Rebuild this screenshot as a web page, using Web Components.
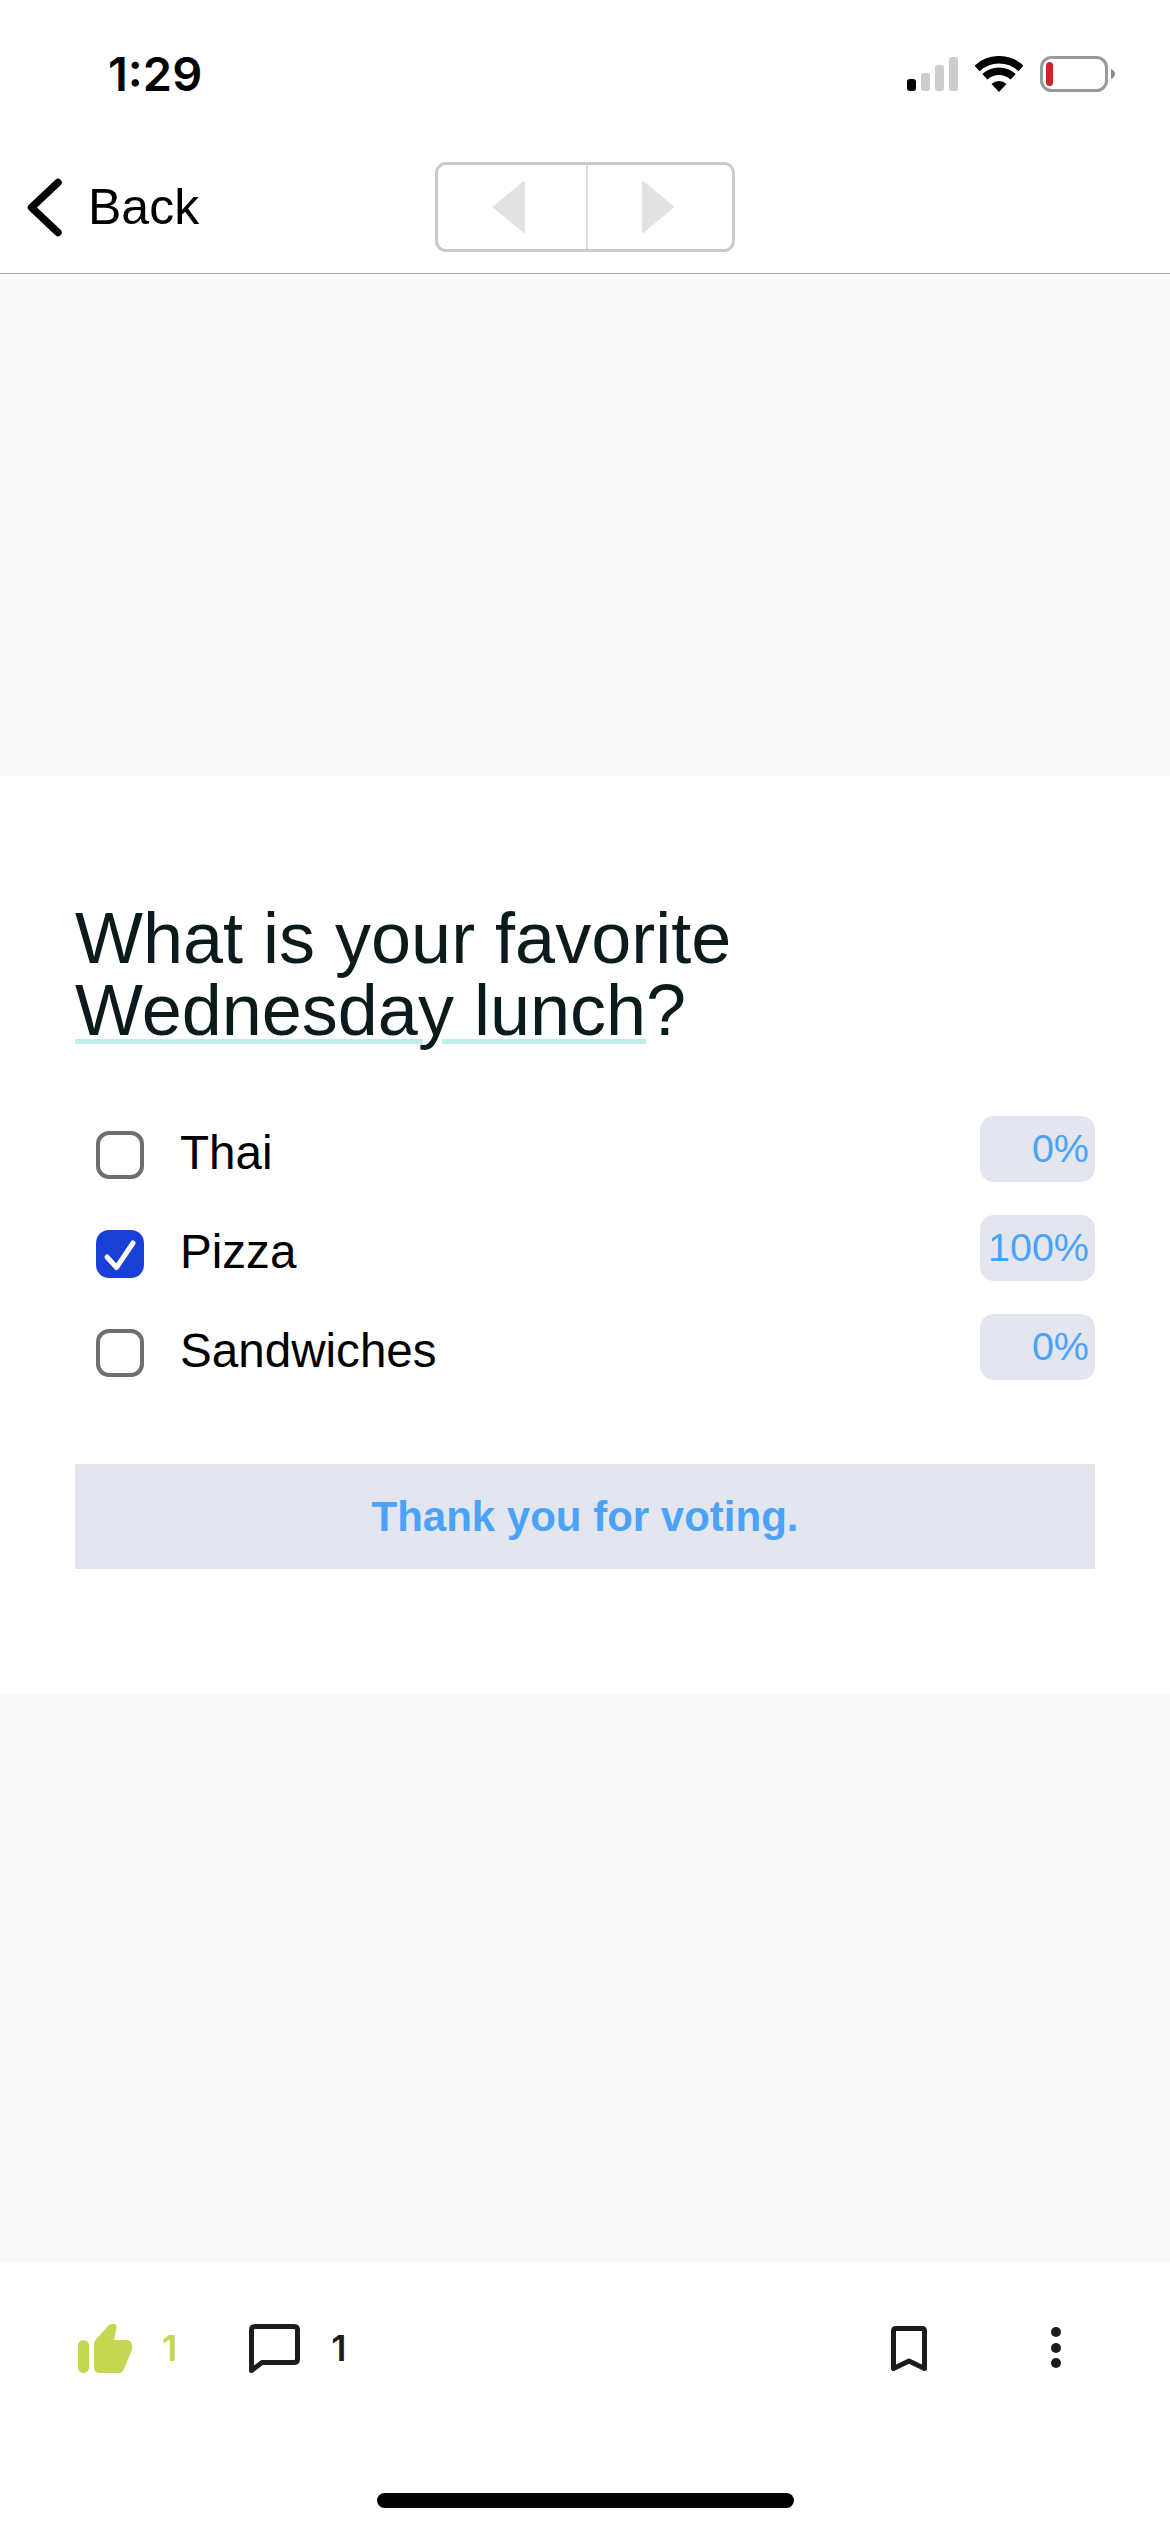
<!DOCTYPE html>
<html lang="en">
<head>
<meta charset="utf-8">
<title>Poll</title>
<style>
    html, body { margin: 0; padding: 0; background: #fff; }
    body { width: 1170px; height: 2532px; overflow: hidden; font-family: "Liberation Sans", Arial, sans-serif; }
</style>
</head>
<body>
<app-screen>
    <status-bar time="1:29"></status-bar>
    <nav-bar></nav-bar>
    <gray-band size="502"></gray-band>
    <poll-card>
        <span slot="question">What is your favorite <u>Wednesday lunch</u>?</span>
        <poll-option percent="0%">Thai</poll-option>
        <poll-option percent="100%" checked>Pizza</poll-option>
        <poll-option percent="0%">Sandwiches</poll-option>
        <span slot="message">Thank you for voting.</span>
    </poll-card>
    <gray-band size="568"></gray-band>
    <action-bar likes="1" comments="1"></action-bar>
</app-screen>

<script>
class AppScreen extends HTMLElement {
    constructor() {
        super();
        this.attachShadow({mode: 'open'});
        this.shadowRoot.innerHTML = `
            <style>
                :host { display: flex; flex-direction: column; width: 1170px; height: 2532px; }
            </style>
            <slot></slot>
        `;
    }
}

class StatusBar extends HTMLElement {
    constructor() {
        super();
        this.attachShadow({mode: 'open'});
    }
    connectedCallback() {
        this.shadowRoot.innerHTML = `
            <style>
                :host { display: flex; align-items: center; justify-content: space-between; box-sizing: border-box; height: 100px; padding: 48px 55px 0 108px; }
                .time { font: 600 47px/52px Inter, "Liberation Sans", sans-serif; color: #000; }
                .icons { display: flex; align-items: center; }
                svg { display: block; }
                .wifi { margin-left: 17px; }
                .battery { margin-left: 17px; }
            </style>
            <span class="time">${this.getAttribute('time')}</span>
            <div class="icons">
                <svg width="51" height="34" viewBox="0 0 51 34">
                    <rect x="0" y="22" width="9" height="12" rx="3" fill="#000"/>
                    <rect x="14" y="16" width="9" height="18" rx="3" fill="#ccc"/>
                    <rect x="28" y="8" width="9" height="26" rx="3" fill="#ccc"/>
                    <rect x="42" y="0" width="9" height="34" rx="3" fill="#ccc"/>
                </svg>
                <svg class="wifi" width="48" height="36" viewBox="0 0 48 36">
                    <path d="M2 12.4A32.25 32.25 0 0 1 46 12.4" fill="none" stroke="#000" stroke-width="7.5"/>
                    <path d="M9.85 20.8A20.75 20.75 0 0 1 38.15 20.8" fill="none" stroke="#000" stroke-width="7.5"/>
                    <path d="M24 36L16.5 28A11 11 0 0 1 31.5 28Z" fill="#000"/>
                </svg>
                <svg class="battery" width="75" height="36" viewBox="0 0 75 36">
                    <rect x="1.5" y="1.5" width="65" height="33" rx="10" fill="#fff" stroke="#999" stroke-width="3"/>
                    <rect x="6" y="6" width="7" height="24" rx="3.5" fill="#c82727"/>
                    <path d="M71 13Q75 15 75 18Q75 21 71 23Z" fill="#888"/>
                </svg>
            </div>
        `;
    }
}

class NavBar extends HTMLElement {
    constructor() {
        super();
        this.attachShadow({mode: 'open'});
        this.shadowRoot.innerHTML = `
            <style>
                :host { display: grid; grid-template-columns: 1fr auto 1fr; align-items: center; box-sizing: border-box; height: 174px; padding: 62px 0 21px; border-bottom: 1px solid #b0b0b0; }
                .back { display: flex; align-items: center; padding-left: 26px; font-size: 50px; color: #000; }
                .back svg { display: block; margin-right: 25px; }
                .pager { display: flex; box-sizing: border-box; width: 300px; height: 90px; border: 3px solid #c9c9d0; border-radius: 11px; }
                .pager div { flex: 1; display: flex; align-items: center; justify-content: center; }
                .pager div:first-child { padding-right: 6px; }
                .pager div + div { padding-right: 3px; border-left: 2px solid #dcdcdf; }
                .pager svg { display: block; }
            </style>
            <div class="back">
                <svg width="37" height="59" viewBox="0 0 37 59">
                    <path d="M32 4.5L5.5 29.5L32 54.5" fill="none" stroke="#000" stroke-width="7.5" stroke-linecap="round" stroke-linejoin="round"/>
                </svg>
                <span>Back</span>
            </div>
            <div class="pager">
                <div><svg width="32" height="52" viewBox="0 0 32 52"><path d="M31 1V51L1 26Z" fill="#e2e2e4" stroke="#e2e2e4" stroke-width="2" stroke-linejoin="round"/></svg></div>
                <div><svg width="32" height="52" viewBox="0 0 32 52"><path d="M1 1V51L31 26Z" fill="#e2e2e4" stroke="#e2e2e4" stroke-width="2" stroke-linejoin="round"/></svg></div>
            </div>
            <div></div>
        `;
    }
}

class GrayBand extends HTMLElement {
    constructor() {
        super();
        this.attachShadow({mode: 'open'});
        this.shadowRoot.innerHTML = `
            <style>
                :host { display: block; background: #fafafa; }
            </style>
        `;
    }
    connectedCallback() {
        this.style.height = this.getAttribute('size') + 'px';
    }
}

class PollCard extends HTMLElement {
    constructor() {
        super();
        this.attachShadow({mode: 'open'});
        this.shadowRoot.innerHTML = `
            <style>
                :host { display: block; box-sizing: border-box; height: 919px; padding: 126px 75px 0; background: #fff; }
                h2 { margin: 0; max-width: 800px; font-size: 72px; line-height: 72px; font-weight: 400; color: #0b1b1b; }
                .options { display: flex; flex-direction: column; gap: 33px; margin-top: 70px; }
                .message { display: flex; align-items: center; justify-content: center; height: 105px; margin-top: 84px; background: #e3e6ef; color: #4aa3f8; font-size: 42px; font-weight: 700; }
            </style>
            <h2><slot name="question"></slot></h2>
            <div class="options"><slot></slot></div>
            <div class="message"><slot name="message"></slot></div>
        `;
    }
    connectedCallback() {
        const u = this.querySelector('u');
        u.style.textDecoration = 'underline';
        u.style.textDecorationColor = '#bdf0ec';
        u.style.textDecorationThickness = '5px';
        u.style.textUnderlineOffset = '4px';
    }
}

class PollOption extends HTMLElement {
    constructor() {
        super();
        this.attachShadow({mode: 'open'});
    }
    connectedCallback() {
        const checked = this.hasAttribute('checked');
        this.shadowRoot.innerHTML = `
            <style>
                :host { display: flex; align-items: flex-start; height: 66px; padding-left: 21px; }
                .box { box-sizing: border-box; flex: none; width: 48px; height: 48px; margin-top: 15px; border: 4px solid #6e6e72; border-radius: 13px; }
                .box.on { border: none; background: #1a3fd6; }
                .box svg { display: block; }
                .label { flex: 1; margin: 4px 0 0 36px; font-size: 47.6px; line-height: 66px; color: #000; }
                .pill { box-sizing: border-box; display: flex; justify-content: flex-end; flex: none; width: 115px; height: 66px; padding-right: 6px; border-radius: 14px; background: #e3e6ef; color: #4aa3f8; font-size: 39.5px; line-height: 64px; }
            </style>
            <div class="box ${checked ? 'on' : ''}">
                ${checked ? '<svg width="48" height="48" viewBox="0 0 48 48"><path d="M11 27L20.5 37.5L37 13" fill="none" stroke="#fff" stroke-width="5" stroke-linecap="round" stroke-linejoin="round"/></svg>' : ''}
            </div>
            <span class="label"><slot></slot></span>
            <span class="pill">${this.getAttribute('percent')}</span>
        `;
    }
}

class ActionBar extends HTMLElement {
    constructor() {
        super();
        this.attachShadow({mode: 'open'});
    }
    connectedCallback() {
        this.shadowRoot.innerHTML = `
            <style>
                :host { display: flex; flex-direction: column; box-sizing: border-box; height: 269px; padding-top: 60px; background: #fff; }
                .row { display: flex; align-items: center; height: 50px; padding: 0 109px 0 78px; font: 600 36px/50px Inter, "Noto Sans", sans-serif; color: #1c1c1e; }
                svg { display: block; flex: none; }
                .likes { margin-left: 30px; color: #c5d653; }
                .comment { margin-left: 72px; }
                .comments { margin-left: 31px; }
                .bookmark { margin-left: auto; }
                .dots { margin-left: 124px; }
                .home { align-self: center; width: 417px; height: 15px; margin-top: 120px; border-radius: 8px; background: #000; }
            </style>
            <div class="row">
                <svg width="54" height="50" viewBox="0 0 54 50">
                    <rect x="0" y="17" width="11" height="33" rx="5.5" fill="#c5d653"/>
                    <path d="M16 21Q16 18.5 18 16.5L30 3Q33 0 36.5 1Q39 2.5 38.5 5.5L36 17H48Q54 17 54 23V26Q54 27.5 53 29L46 46Q44.5 50 41 50H22Q16 50 16 44Z" fill="#c5d653"/>
                </svg>
                <span class="likes">${this.getAttribute('likes')}</span>
                <svg class="comment" width="51" height="49" viewBox="0 0 51 49">
                    <path d="M2.5 46.5V6Q2.5 2.5 6 2.5H45Q48.5 2.5 48.5 6V35Q48.5 38.5 45 38.5H13Z" fill="none" stroke="#1c1c1e" stroke-width="5" stroke-linejoin="round"/>
                </svg>
                <span class="comments">${this.getAttribute('comments')}</span>
                <svg class="bookmark" width="36" height="45" viewBox="0 0 36 45">
                    <path d="M2.5 42.5V5Q2.5 2.5 5 2.5H31Q33.5 2.5 33.5 5V42.5L18 35Z" fill="none" stroke="#1c1c1e" stroke-width="5" stroke-linejoin="round"/>
                </svg>
                <svg class="dots" width="10" height="42" viewBox="0 0 10 42">
                    <circle cx="5" cy="5" r="5" fill="#1c1c1e"/>
                    <circle cx="5" cy="21" r="5" fill="#1c1c1e"/>
                    <circle cx="5" cy="36" r="5" fill="#1c1c1e"/>
                </svg>
            </div>
            <div class="home"></div>
        `;
    }
}

customElements.define('app-screen', AppScreen);
customElements.define('status-bar', StatusBar);
customElements.define('nav-bar', NavBar);
customElements.define('gray-band', GrayBand);
customElements.define('poll-option', PollOption);
customElements.define('poll-card', PollCard);
customElements.define('action-bar', ActionBar);
</script>
</body>
</html>
